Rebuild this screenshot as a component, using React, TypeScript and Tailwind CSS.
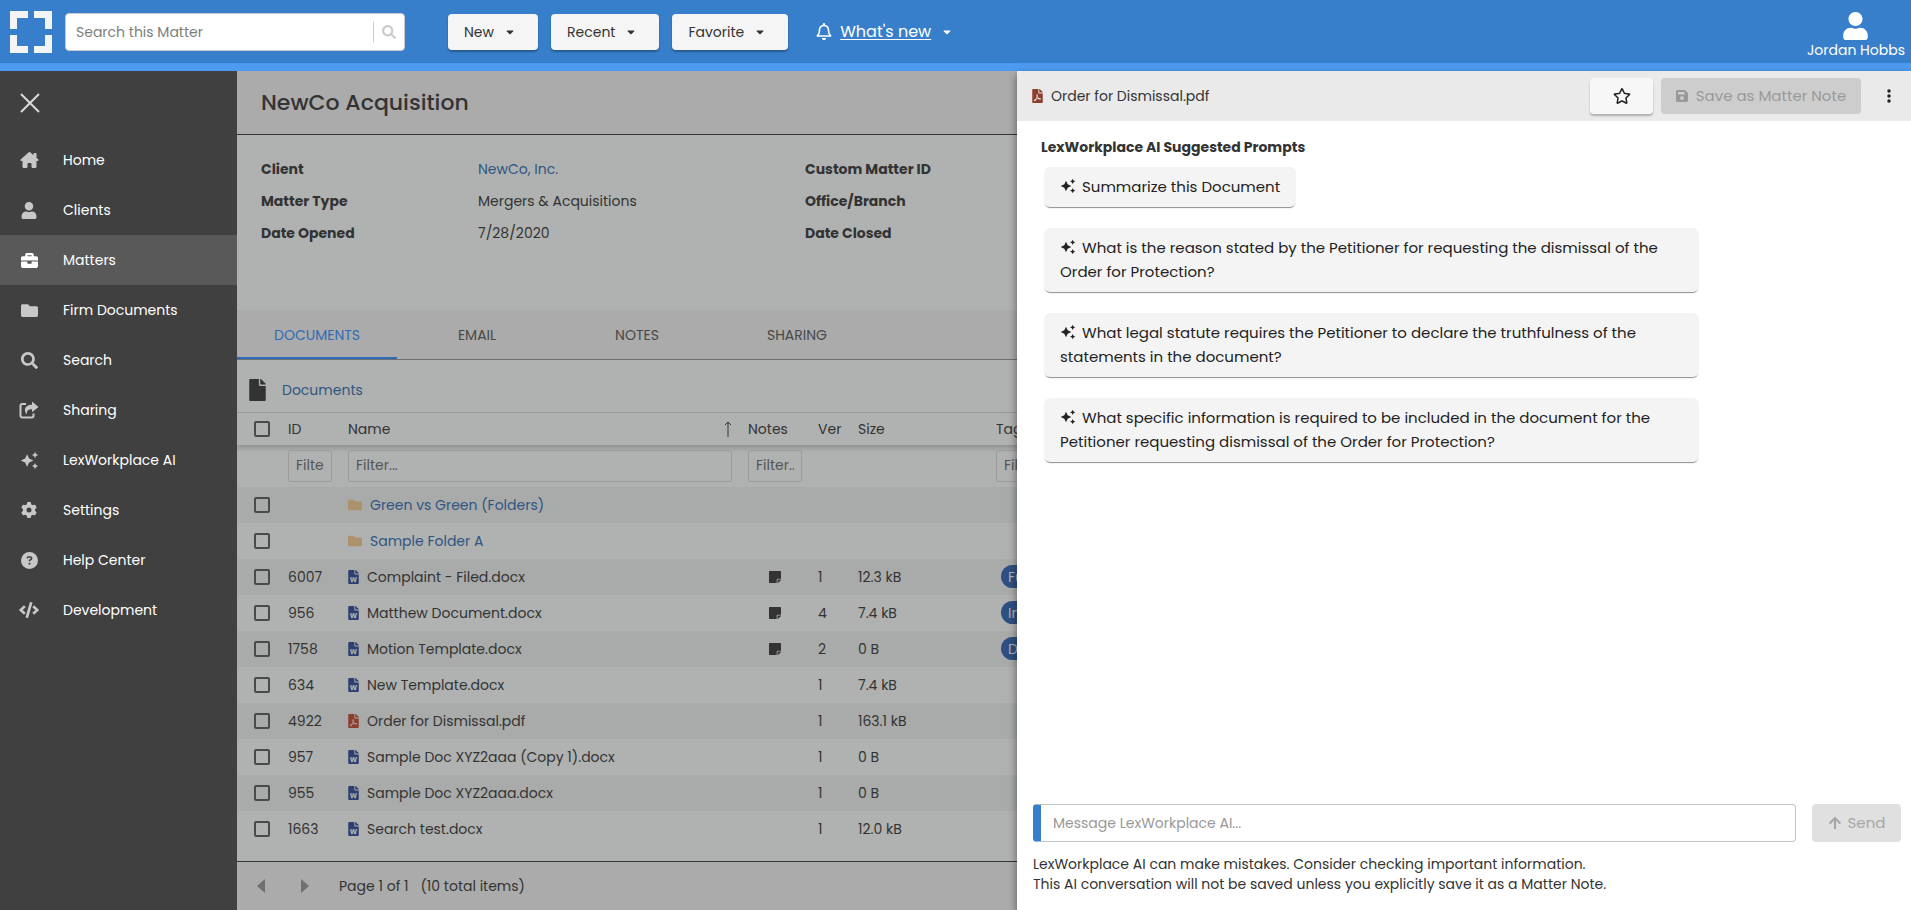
import type { ReactNode } from 'react';
import {
  FaArrowUp,
  FaBriefcase,
  FaCaretDown,
  FaCode,
  FaFile,
  FaFilePdf,
  FaFileWord,
  FaFolder,
  FaRegBell,
  FaRegStar,
  FaSearch,
  FaStickyNote,
  FaUser,
} from 'react-icons/fa';
import { FaCircleQuestion, FaEllipsisVertical, FaGear, FaHouseChimney } from 'react-icons/fa6';
import { MdAutoAwesome } from 'react-icons/md';

function ShareIcon({ className }: { className?: string }) {
  return (
    <svg viewBox="0 0 20 18" className={className}>
      <path
        d="M7 3H3.2A1.7 1.7 0 0 0 1.5 4.7V14.8A1.7 1.7 0 0 0 3.2 16.5H12.800A1.7 1.7 0 0 0 14.5 14.8V12.5"
        fill="none"
        stroke="currentColor"
        strokeWidth="2"
      />
      <path d="M13 0.5 19.5 6 13 11.3V8.2C9 8.2 7.6 9.5 8 13.5 4.5 10 5 4 13 3.7z" fill="currentColor" />
    </svg>
  );
}

function SaveIcon({ className }: { className?: string }) {
  return (
    <svg viewBox="0 0 12 12" className={className}>
      <path
        fillRule="evenodd"
        fill="currentColor"
        d="M1.5 0H9L12 3V10.5A1.5 1.5 0 0 1 10.5 12H1.5A1.5 1.5 0 0 1 0 10.5V1.5A1.5 1.5 0 0 1 1.5 0zM2 2V4.5H8.5V2zM6 6.2A1.9 1.9 0 1 0 6 10 1.9 1.9 0 1 0 6 6.2z"
      />
    </svg>
  );
}

function Logo() {
  return (
    <svg viewBox="0 0 42 42" fill="#f4f4f4" className="h-[42px] w-[42px] shrink-0" aria-hidden="true">
      <path d="M0 0H18V7H7V18H0z" />
      <path d="M24 0H42V18H35V7H24z" />
      <path d="M0 24H7V35H18V42H0z" />
      <path d="M35 24H42V42H24V35H35z" />
    </svg>
  );
}

const navItems = [
  { label: 'Home', icon: <FaHouseChimney className="h-4 w-[19px]" /> },
  { label: 'Clients', icon: <FaUser className="h-[17px] w-4" /> },
  { label: 'Matters', icon: <FaBriefcase className="h-[17px] w-[17px]" />, active: true },
  { label: 'Firm Documents', icon: <FaFolder className="h-[17px] w-[17px]" /> },
  { label: 'Search', icon: <FaSearch className="h-[17px] w-[17px]" /> },
  { label: 'Sharing', icon: <ShareIcon className="h-[18px] w-5" /> },
  { label: 'LexWorkplace AI', icon: <MdAutoAwesome className="h-[19px] w-[19px]" /> },
  { label: 'Settings', icon: <FaGear className="h-4 w-4" /> },
  { label: 'Help Center', icon: <FaCircleQuestion className="h-[17px] w-[17px]" /> },
  { label: 'Development', icon: <FaCode className="h-4 w-5" /> },
];

const details = [
  { label: 'Client', value: 'NewCo, Inc.', link: true, other: 'Custom Matter ID' },
  { label: 'Matter Type', value: 'Mergers & Acquisitions', other: 'Office/Branch' },
  { label: 'Date Opened', value: '7/28/2020', other: 'Date Closed' },
];

const tabs = ['DOCUMENTS', 'EMAIL', 'NOTES', 'SHARING'];

type Row = {
  id?: string;
  name: string;
  type: 'folder' | 'word' | 'pdf';
  note?: boolean;
  ver?: string;
  size?: string;
  tag?: string;
};

const rows: Row[] = [
  { name: 'Green vs Green (Folders)', type: 'folder' },
  { name: 'Sample Folder A', type: 'folder' },
  { id: '6007', name: 'Complaint - Filed.docx', type: 'word', note: true, ver: '1', size: '12.3 kB', tag: 'Fully Executed' },
  { id: '956', name: 'Matthew Document.docx', type: 'word', note: true, ver: '4', size: '7.4 kB', tag: 'In Review' },
  { id: '1758', name: 'Motion Template.docx', type: 'word', note: true, ver: '2', size: '0 B', tag: 'Draft' },
  { id: '634', name: 'New Template.docx', type: 'word', ver: '1', size: '7.4 kB' },
  { id: '4922', name: 'Order for Dismissal.pdf', type: 'pdf', ver: '1', size: '163.1 kB' },
  { id: '957', name: 'Sample Doc XYZ2aaa (Copy 1).docx', type: 'word', ver: '1', size: '0 B' },
  { id: '955', name: 'Sample Doc XYZ2aaa.docx', type: 'word', ver: '1', size: '0 B' },
  { id: '1663', name: 'Search test.docx', type: 'word', ver: '1', size: '12.0 kB' },
];

const prompts = [
  'Summarize this Document',
  'What is the reason stated by the Petitioner for requesting the dismissal of the Order for Protection?',
  'What legal statute requires the Petitioner to declare the truthfulness of the statements in the document?',
  'What specific information is required to be included in the document for the Petitioner requesting dismissal of the Order for Protection?',
];

function MenuButton({ children }: { children: ReactNode }) {
  return (
    <button className="flex h-9 items-center gap-3 rounded bg-[#f5f5f5] pr-6 pl-4 text-sm text-[#333] shadow-[0_2px_2px_rgba(0,0,0,0.3)]">
      {children}
      <FaCaretDown className="h-3 w-2" />
    </button>
  );
}

function Checkbox({ label }: { label: string }) {
  return (
    <input
      type="checkbox"
      aria-label={label}
      className="block h-4 w-4 appearance-none rounded-[2px] border-2 border-[#4a4a4a]"
    />
  );
}

function FilterInput({ label }: { label: string }) {
  return (
    <input
      type="text"
      aria-label={`Filter by ${label}`}
      placeholder="Filter..."
      className="block h-8 w-full rounded-[2px] border border-[#9b9d9c] px-[7px] text-sm placeholder:text-[#545656]"
    />
  );
}

function TopBar() {
  return (
    <header className="flex h-[71px] shrink-0 items-center border-b-8 border-[#4d9bf0] bg-[#377fcb] pl-2.5">
      <Logo />
      <div className="ml-[13px] flex h-[38px] w-[340px] items-center rounded border border-[#c5c9cd] bg-white">
        <input
          type="text"
          aria-label="Search this Matter"
          placeholder="Search this Matter"
          className="h-full min-w-0 flex-1 pt-0.5 pl-2.5 text-sm placeholder:text-[#7b7f7b]"
        />
        <button aria-label="Search" className="flex h-5 items-center border-l border-[#ccc] pr-2 pl-2 text-[#ccc]">
          <FaSearch className="h-[14px] w-[14px]" />
        </button>
      </div>
      <div className="ml-[43px] flex gap-[13px]">
        <MenuButton>New</MenuButton>
        <MenuButton>Recent</MenuButton>
        <MenuButton>Favorite</MenuButton>
      </div>
      <button className="ml-7 flex items-center text-white">
        <FaRegBell className="h-[17px] w-4" />
        <span className="ml-2 text-base underline underline-offset-2">What's new</span>
        <FaCaretDown className="ml-3 h-3 w-2" />
      </button>
      <button className="mr-1.5 ml-auto flex flex-col items-center pt-2 text-white">
        <FaUser className="h-7 w-[25px]" />
        <span className="text-sm">Jordan Hobbs</span>
      </button>
    </header>
  );
}

function Sidebar() {
  return (
    <nav className="w-[237px] shrink-0 bg-[#404040]">
      <button aria-label="Close menu" className="flex h-16 items-center pl-5 text-[#d8d8d8]">
        <svg viewBox="0 0 20 20" className="h-5 w-5" stroke="currentColor" strokeWidth="2">
          <path d="M1 1 19 19M19 1 1 19" />
        </svg>
      </button>
      <ul>
        {navItems.map((item) => (
          <li key={item.label}>
            <a
              href="#"
              className={`flex h-[50px] items-center gap-6 pl-[19px] text-sm text-white ${
                item.active ? 'bg-[#595959]' : ''
              }`}
            >
              <span className={`flex w-5 justify-center ${item.active ? '' : 'text-[#c8c8c8]'}`}>{item.icon}</span>
              {item.label}
            </a>
          </li>
        ))}
      </ul>
    </nav>
  );
}

function FileIcon({ type }: { type: Row['type'] }) {
  if (type === 'folder') return <FaFolder className="mr-2 h-[14px] w-[14px] shrink-0 text-[#ab926c]" />;
  if (type === 'pdf') return <FaFilePdf className="mr-2 h-[14px] w-[11px] shrink-0 text-[#8c3d2e]" />;
  return <FaFileWord className="mr-2 h-[14px] w-[11px] shrink-0 text-[#2d3f70]" />;
}

function DocumentsTable() {
  return (
    <table className="w-full min-w-[920px] table-fixed text-left text-sm">
      <colgroup>
        <col className="w-[51px]" />
        <col className="w-[60px]" />
        <col className="w-[400px]" />
        <col className="w-[70px]" />
        <col className="w-10" />
        <col className="w-[138px]" />
        <col />
      </colgroup>
      <thead>
        <tr className="h-8 border-t border-[#999b9a] shadow-[0_3px_5px_rgba(0,0,0,0.2)]">
          <th className="pl-[17px]">
            <Checkbox label="Select all" />
          </th>
          <th className="font-normal">ID</th>
          <th className="font-normal">
            <div className="flex items-center justify-between pr-4">
              Name
              <svg viewBox="0 0 8 16" className="h-4 w-2" fill="none" stroke="currentColor">
                <path d="M4 16V1M1 4 4 1 7 4" />
              </svg>
            </div>
          </th>
          <th className="font-normal">Notes</th>
          <th className="font-normal">Ver</th>
          <th className="font-normal">Size</th>
          <th className="font-normal">Tags</th>
        </tr>
      </thead>
      <tbody>
        <tr className="h-[42px]">
          <td />
          <td className="pr-4">
            <FilterInput label="ID" />
          </td>
          <td className="pr-4">
            <FilterInput label="name" />
          </td>
          <td className="pr-4">
            <FilterInput label="notes" />
          </td>
          <td />
          <td />
          <td className="pr-4">
            <FilterInput label="tags" />
          </td>
        </tr>
        {rows.map((row) => (
          <tr key={row.name} className="h-9 even:bg-[#a9abaa]">
            <td className="pl-[17px]">
              <Checkbox label={`Select ${row.name}`} />
            </td>
            <td>{row.id}</td>
            <td>
              <div className="flex items-center">
                <FileIcon type={row.type} />
                {row.type === 'folder' ? (
                  <a href="#" className="text-[#2f5582]">
                    {row.name}
                  </a>
                ) : (
                  row.name
                )}
              </div>
            </td>
            <td>{row.note && <FaStickyNote className="ml-[21px] h-[14px] w-3 text-[#333]" />}</td>
            <td>{row.ver}</td>
            <td>{row.size}</td>
            <td className="whitespace-nowrap">
              {row.tag && (
                <span className="ml-[5px] inline-flex h-[23px] items-center rounded-full bg-[#2f4f82] px-[7px] text-[#b0b2b1]">
                  {row.tag}
                </span>
              )}
            </td>
          </tr>
        ))}
      </tbody>
    </table>
  );
}

function MatterView() {
  return (
    <main className="flex min-w-0 flex-1 flex-col overflow-hidden bg-[#b0b2b1] text-[#333]">
      <div className="flex h-16 shrink-0 items-center border-b border-[#333] bg-[#ababab] pl-6">
        <h1 className="text-[22px] font-medium">NewCo Acquisition</h1>
      </div>

      <dl className="flex h-[175px] shrink-0 flex-col pt-[18px] pl-6 text-sm">
        {details.map((row) => (
          <div key={row.label} className="flex h-8 items-center">
            <dt className="w-[217px] shrink-0 font-bold">{row.label}</dt>
            <dd className="w-[327px] shrink-0">
              {row.link ? (
                <a href="#" className="text-[#2f5582]">
                  {row.value}
                </a>
              ) : (
                row.value
              )}
            </dd>
            <dt className="shrink-0 font-bold">{row.other}</dt>
          </div>
        ))}
      </dl>

      <div role="tablist" className="flex h-[50px] shrink-0 border-b border-[#6f6f6f] bg-[#ababab]">
        {tabs.map((tab, i) => (
          <button
            key={tab}
            role="tab"
            aria-selected={i === 0}
            className={`w-40 shrink-0 border-b-2 pt-0.5 text-sm ${
              i === 0 ? 'border-[#2f6cb8] text-[#2f6cb8]' : 'border-transparent text-[#484848]'
            }`}
          >
            {tab}
          </button>
        ))}
      </div>

      <div className="flex h-[52px] shrink-0 items-center pt-2 pl-3">
        <FaFile className="h-[22px] w-[17px]" />
        <a href="#" className="ml-4 text-sm text-[#2f5582]">
          Documents
        </a>
      </div>

      <DocumentsTable />

      <div className="mt-auto flex h-[49px] shrink-0 items-center border-t border-[#333] bg-[#ababab] pl-5 text-sm">
        <button aria-label="Previous page" className="text-[#707070]">
          <svg viewBox="0 0 8 14" fill="currentColor" className="h-[14px] w-2">
            <path d="M8 0V14L0 7z" />
          </svg>
        </button>
        <button aria-label="Next page" className="ml-9 text-[#707070]">
          <svg viewBox="0 0 8 14" fill="currentColor" className="h-[14px] w-2">
            <path d="M0 0V14L8 7z" />
          </svg>
        </button>
        <span className="ml-[30px]">Page 1 of 1</span>
        <span className="ml-3">(10 total items)</span>
      </div>
    </main>
  );
}

function AiPanel() {
  return (
    <aside className="z-10 flex w-[894px] shrink-0 flex-col bg-white text-[#222] shadow-[0_4px_8px_rgba(0,0,0,0.5)]">
      <div className="flex h-[50px] items-center bg-[#eaeaea] pr-3.5 pl-[15px]">
        <FaFilePdf className="h-[14px] w-[11px] text-[#8c3d2e]" />
        <span className="ml-2 text-sm text-[#333]">Order for Dismissal.pdf</span>
        <button
          aria-label="Add to favorites"
          className="ml-auto flex h-9 w-[63px] items-center justify-center rounded bg-[#f7f7f7] shadow-[0_2px_2px_rgba(0,0,0,0.25)]"
        >
          <FaRegStar className="h-[18px] w-[18px]" />
        </button>
        <button
          disabled
          className="ml-2 flex h-9 w-[200px] items-center justify-center gap-2 rounded bg-[#cdcdcd] text-[15px] text-[#999]"
        >
          <SaveIcon className="h-3 w-3" />
          Save as Matter Note
        </button>
        <button aria-label="More options" className="ml-5">
          <FaEllipsisVertical className="h-4 w-4" />
        </button>
      </div>

      <section className="flex-1 px-6 pt-4">
        <h2 className="text-sm font-bold text-[#333]">LexWorkplace AI Suggested Prompts</h2>
        <div className="mt-2.5 ml-[3px] flex max-w-[655px] flex-col items-start gap-[21px]">
          {prompts.map((text) => (
            <button
              key={text}
              className="rounded-md bg-[#f4f4f4] px-4 py-2 text-left text-[15px] leading-6 shadow-[0_2px_1px_-1px_rgba(0,0,0,0.45)]"
            >
              <MdAutoAwesome className="mr-1.5 inline h-4 w-4 align-[-2px]" />
              {text}
            </button>
          ))}
        </div>
      </section>

      <form className="pr-2.5 pb-4 pl-4">
        <div className="flex gap-4">
          <input
            type="text"
            aria-label="Message LexWorkplace AI"
            placeholder="Message LexWorkplace AI..."
            className="h-[38px] min-w-0 flex-1 rounded border border-l-8 border-[#c4c4c4] border-l-[#377fcb] pl-3 text-sm placeholder:text-[#999]"
          />
          <button
            disabled
            className="flex h-[38px] w-[89px] items-center justify-center gap-1.5 rounded bg-[#e0e0e0] text-[15px] text-[#a6a6a6]"
          >
            <FaArrowUp className="h-[14px] w-[14px]" />
            Send
          </button>
        </div>
        <p className="mt-3 text-sm text-[#333]">
          LexWorkplace AI can make mistakes. Consider checking important information.
          <br />
          This AI conversation will not be saved unless you explicitly save it as a Matter Note.
        </p>
      </form>
    </aside>
  );
}

export default function App() {
  return (
    <div className="flex h-screen flex-col overflow-hidden font-[Poppins,Inter,sans-serif]">
      <TopBar />
      <div className="flex min-h-0 flex-1">
        <Sidebar />
        <MatterView />
        <AiPanel />
      </div>
    </div>
  );
}
